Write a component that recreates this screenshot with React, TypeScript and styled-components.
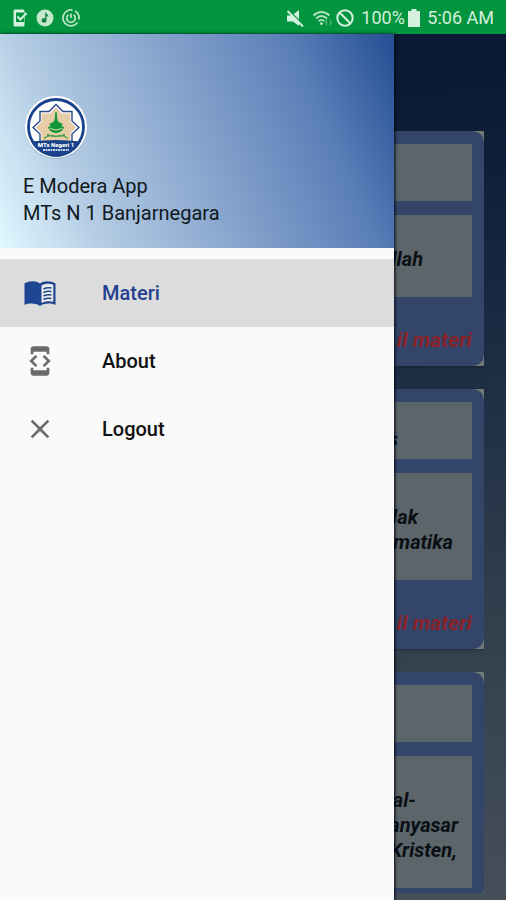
import React from "react";
import styled, { createGlobalStyle, css } from "styled-components";
import { MdClose, MdDeveloperMode } from "react-icons/md";

const GlobalStyle = createGlobalStyle`
  *, *::before, *::after { box-sizing: border-box; }
  body {
    margin: 0;
    font-family: Roboto, "Liberation Sans", sans-serif;
    color: #111;
  }
`;

const Shell = styled.div`
  display: flex;
  flex-direction: column;
  height: 100vh;
  overflow: hidden;
`;

const StatusBar = styled.header`
  display: flex;
  align-items: center;
  justify-content: space-between;
  flex: none;
  height: 34px;
  padding: 2px 12px 0;
  background: #02943f;
  color: #d5f0dc;
  font-size: 18px;
  line-height: 24px;
`;

const StatusGroup = styled.div<{ $gap: number }>`
  display: flex;
  align-items: center;
  gap: ${(p) => p.$gap}px;
  white-space: nowrap;
`;

const StatusIcon = styled.svg`
  display: block;
  flex: none;
`;

const Stage = styled.div`
  flex: 1;
  min-height: 0;
  display: grid;
  grid-template: minmax(0, 1fr) / minmax(0, 1fr);
`;

const Page = styled.main`
  grid-area: 1 / 1;
  display: flex;
  flex-direction: column;
  overflow: hidden;
  padding: 97px 22px 7px;
  background: linear-gradient(176deg, #0a1a33 8%, #10203a 20%, #1f2f45 44%, #313f4d 68%, #454f5a 100%);
`;

const CardList = styled.div`
  display: flex;
  flex-direction: column;
  gap: 23px;
  min-height: 0;
  overflow: hidden;
`;

const Card = styled.article`
  flex: none;
  display: flex;
  flex-direction: column;
  padding: 13px 12px;
  background:
    radial-gradient(circle at 0 100%, #34456a 9px, #747a78 10px) top right / 10px 10px no-repeat,
    radial-gradient(circle at 0 0, #34456a 9px, #747a78 10px) bottom right / 10px 10px no-repeat,
    #34456a;
  border-radius: 1px;
  box-shadow: 0 1px 3px rgba(0, 0, 0, 0.3);
  font-size: 20px;
  font-style: italic;
  font-weight: 700;
  line-height: 25px;
`;

const panel = css`
  margin: 0;
  background: #5b656a;
  color: #0a0f14;
  text-align: right;
`;

const CardTitle = styled.h2`
  ${panel}
  height: 57px;
  padding: 25px 74px 0 0;
  font-size: 20px;
  line-height: 25px;
`;

const CardBody = styled.div`
  ${panel}
  margin-top: 14px;
  padding: 32px 0 25px;
`;

const Line = styled.div<{ $end: number }>`
  padding-right: ${(p) => p.$end}px;
  white-space: nowrap;
`;

const CardLink = styled.a`
  align-self: flex-end;
  margin-top: 31px;
  color: #8a2229;
  font-size: 21px;
  text-decoration: none;
`;

const Drawer = styled.aside`
  grid-area: 1 / 1;
  z-index: 1;
  width: calc(100% - 112px);
  background: #fafafa;
  box-shadow: 1px 0 3px #000814;
`;

const DrawerHeader = styled.div`
  padding: 61px 23px 21px;
  background: linear-gradient(67deg, #e0f8ff 0%, #b3cbe3 22%, #83a1cb 52%, #5a7eb7 78%, #244d93 100%);
  font-size: 20px;
  line-height: 27px;
`;

const Logo = styled.svg`
  display: block;
  margin: 0 0 14px 1px;
`;

const Heading = styled.div`
  color: #101820;
`;

const Menu = styled.nav`
  display: flex;
  flex-direction: column;
  padding-top: 11px;
`;

const MenuItem = styled.button<{ $active?: boolean }>`
  display: flex;
  align-items: center;
  gap: 46px;
  height: 68px;
  padding: 0 24px;
  border: 0;
  background: ${(p) => (p.$active ? "#dcdcdc" : "transparent")};
  color: ${(p) => (p.$active ? "#26408f" : "#111")};
  font: 500 20px/24px Roboto, "Liberation Sans", sans-serif;
  text-align: left;
  cursor: pointer;

  svg {
    flex: none;
    color: ${(p) => (p.$active ? "#1d4591" : "#6b6b6b")};
  }
`;

function BookIcon({ size }: { size: number }) {
  return (
    <svg width={size} height={size} viewBox="0 0 32 32" fill="currentColor" aria-hidden="true">
      <path d="M.5 6.500C5 3.500 12 3.500 16 6.500c4-3 11-3 15.500 0v21.500c-4.500-2-11-2-15.500 1-4.500-3-11-3-15.500-1z" />
      <path d="M17.500 8.500c3-2 8-2.300 11.800-.8v17c-3.800-1-8.300-.7-11.800 1.300z" fill="#ecebee" />
      <path
        d="M19.500 12c2.500-1.300 5-1.500 8-1M19.500 15.500c2.500-1.300 5-1.500 8-1M19.500 19c2.500-1.300 5-1.500 8-1M19.500 22.500c2.500-1.300 5-1.500 8-1"
        fill="none" stroke="currentColor" strokeWidth="1.700"
      />
    </svg>
  );
}

const cards = [
  { title: "", link: "il materi", lines: [{ text: "llah", end: 49 }] },
  { title: "s", link: "il materi", lines: [{ text: "lak", end: 54 }, { text: "matika", end: 19 }] },
  {
    title: "",
    lines: [
      { text: "al-", end: 56 },
      { text: "anyasar", end: 14 },
      { text: "Kristen,", end: 15 },
    ],
  },
];

const items = [
  { label: "Materi", Icon: BookIcon, active: true },
  { label: "About", Icon: MdDeveloperMode },
  { label: "Logout", Icon: MdClose },
];

function SchoolLogo() {
  return (
    <Logo width="64" height="64" viewBox="0 0 64 64" role="img" aria-label="MTs Negeri 1">
      <circle cx="32" cy="33" r="31" fill="#8096b0" opacity="0.5" />
      <circle cx="32" cy="32" r="31" fill="#fff" />
      <circle cx="32" cy="32" r="27.5" fill="#fff" stroke="#18428a" strokeWidth="2.8" />
      <path
        d="M32 9.500l7 7h9V26l7 6.500-7 6.500v9.500H16V39l-7-6.500 7-6.500v-9.500h9z"
        fill="#fff" stroke="#2a4a8c" strokeWidth="1.400"
      />
      <path
        d="M32 12.500l6 6h8.500V27l5.500 5.500-5.500 5.500v9h-29v-9L12 32.500 17.500 27v-8.500H26z"
        fill="#e6cda5"
      />
      <path d="M7 46.500q25-3 50 0a28 28 0 0 1-50 0z" fill="#18428a" />
      <path d="M31.300 17h1.400l.6 7c.3 2.500 2 3.500 5.700 5-1.500 1-1.500 1.800-1 2.800l2-.3c-1 4-4 6.500-8 6.500s-7-2.500-8-6.500l2 .3c.5-1 .5-1.800-1-2.800 3.700-1.500 5.400-2.500 5.700-5z" fill="#11963e" />
      <path d="M26 33.500q6 3 12 0" stroke="#d8dfa8" strokeWidth="1" fill="none" />
      <path d="M20 43.500q6-5 12-2 6-3 12 2M23 39.500q9 4 18 0" stroke="#4fa34f" strokeWidth="1.400" fill="none" />
      <text x="32" y="52" textAnchor="middle" fill="#fff" fontSize="6" fontWeight="900" fontFamily="Roboto, sans-serif">MTs Negeri 1</text>
      <path d="M19 55h26" stroke="#c4d0e6" strokeWidth="2" strokeDasharray="2 .5" />
    </Logo>
  );
}

export default function App() {
  return (
    <>
      <GlobalStyle />
      <Shell>
        <StatusBar>
          <StatusGroup $gap={8}>
            <StatusIcon width="16" height="18" viewBox="0 0 16 18" fill="none">
              <path d="M3 .5h8a1.500 1.500 0 0 1 1.500 1.500v14a1.500 1.500 0 0 1-1.500 1.500H3A1.500 1.500 0 0 1 1.500 16V2A1.500 1.500 0 0 1 3 .5z" fill="#d5f0dc" />
              <path d="M4 3.500h8v9.500H4z" fill="#02943f" />
              <path d="M5.500 7.500l3 3 6-6.500" stroke="#d5f0dc" strokeWidth="2" />
            </StatusIcon>
            <StatusIcon width="18" height="18" viewBox="0 0 18 18">
              <circle cx="9" cy="9" r="8.500" fill="#c3e9cd" />
              <path d="M10 3.500c.3 2 2.500 2 2.300 4.500C11.500 7 11 7 10.500 7v4.500a2.400 2.200 0 1 1-1.300-2V3.500z" fill="#157f3c" />
            </StatusIcon>
            <StatusIcon width="18" height="18" viewBox="0 0 18 18" fill="none" stroke="#b5e2c0" strokeWidth="1.800">
              <path d="M10.500 1.100a8 8 0 1 0 5 12.500M13 2a8 8 0 0 1 3.800 8.500" />
              <path d="M6.500 5.800a4.200 4.200 0 1 0 5 0M9 4.500v4.500" />
            </StatusIcon>
          </StatusGroup>
          <StatusGroup $gap={3}>
            <StatusIcon width="18" height="18" viewBox="0 0 18 18">
              <path d="M1 6.500h5L13 1v16l-6-4.500H1z" fill="#d5f0dc" />
              <path d="M2.500 1L18 16.500" stroke="#02943f" strokeWidth="1.500" />
              <path d="M1.500 2L17 17.500" stroke="#d5f0dc" strokeWidth="2" />
            </StatusIcon>
            <StatusIcon width="26" height="18" viewBox="0 0 26 18" fill="none">
              <path d="M6.500 6.500q8-7 16 0M9 9.500q5.500-5 11 0M11.500 12.200q3-2.700 6 0" stroke="#b5e2c0" strokeWidth="1.800" />
              <circle cx="14.500" cy="14.500" r="1.500" fill="#b5e2c0" />
              <path d="M19.500 16.500v-5l-1.500 2M23.500 10.500v5l1.500-2" stroke="#4fb572" strokeWidth="1.200" />
            </StatusIcon>
            <StatusIcon width="18" height="18" viewBox="0 0 18 18" fill="none" stroke="#d5f0dc" strokeWidth="2">
              <circle cx="9" cy="9" r="7.700" />
              <path d="M3.500 3.500l11 11" />
            </StatusIcon>
            <span>&nbsp;100%</span>
            <StatusIcon width="12" height="18" viewBox="0 0 12 18">
              <path d="M3.500 0h5v2H12v16H0V2h3.500z" fill="#d5f0dc" />
            </StatusIcon>
            <span>&nbsp;5:06 AM</span>
          </StatusGroup>
        </StatusBar>
        <Stage>
          <Page>
            <CardList>
              {cards.map((card, i) => (
                <Card key={i}>
                  <CardTitle>{card.title}</CardTitle>
                  <CardBody>
                    {card.lines.map((line) => (
                      <Line key={line.text} $end={line.end}>{line.text}</Line>
                    ))}
                  </CardBody>
                  {card.link && <CardLink href="#materi">{card.link}</CardLink>}
                </Card>
              ))}
            </CardList>
          </Page>
          <Drawer>
            <DrawerHeader>
              <SchoolLogo />
              <Heading>E Modera App</Heading>
              <Heading>MTs N 1 Banjarnegara</Heading>
            </DrawerHeader>
            <Menu>
              {items.map(({ label, Icon, active }) => (
                <MenuItem key={label} type="button" $active={active}>
                  <Icon size={32} />
                  {label}
                </MenuItem>
              ))}
            </Menu>
          </Drawer>
        </Stage>
      </Shell>
    </>
  );
}
